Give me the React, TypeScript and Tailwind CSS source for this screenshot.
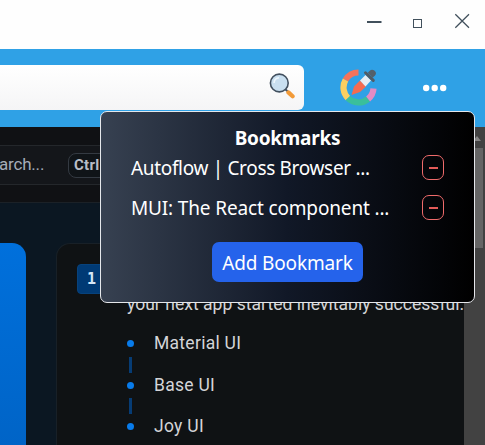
import React from "react";

function WindowControls() {
  return (
    <header className="flex h-[49px] items-start justify-end bg-[#fefefe] pr-[15px] pt-[13px]">
      <svg width="104" height="18" viewBox="0 0 104 18" fill="none" stroke="#41505c">
        <path d="M1 9H15.5" strokeWidth="2" />
        <rect x="47.5" y="6.5" width="8" height="8" />
        <path d="M89.3 1.2L103 14.8M103 1.2L89.3 14.8" strokeWidth="1.25" />
      </svg>
    </header>
  );
}

function SearchIcon() {
  return (
    <svg width="26" height="28" viewBox="0 0 26 28">
      <path d="M16.5 17.5L20 20.5" stroke="#465463" strokeWidth="2" />
      <path d="M19.4 20.4L23.6 24.3" stroke="#f29a38" strokeWidth="4.2" strokeLinecap="round" />
      <circle cx="10.3" cy="11" r="8.9" fill="#c9dff0" stroke="#42505f" strokeWidth="1.6" />
      <path d="M5 11A5.6 5.6 0 0 1 10 5.8" fill="none" stroke="#eef7fd" strokeWidth="1.6" />
    </svg>
  );
}

function ColorPickerIcon() {
  return (
    <svg width="38" height="38" viewBox="0 0 38 38" fill="none">
      <path d="M18.5 4.5A15 15 0 0 0 5.5 12" stroke="#f4735b" strokeWidth="6.2" />
      <path d="M5.5 12A15 15 0 0 0 7.9 30.1" stroke="#fbcf61" strokeWidth="6.2" />
      <path d="M7.9 30.1A15 15 0 0 0 28.1 31" stroke="#3abf9c" strokeWidth="6.2" />
      <path d="M28.1 31A15 15 0 0 0 33.5 20.5" stroke="#e28bc4" strokeWidth="6.2" />
      <path d="M11.5 27L14 18.5L20 12.5L26 18.5L20 24Z" fill="#f56b50" />
      <path d="M20 12.5L25.5 7L31 12.5L25.5 18.5Z" fill="#e7edf3" />
      <path d="M25.5 4.8L33.3 12.4" stroke="#505c67" strokeWidth="3" strokeLinecap="round" />
      <path d="M27.8 4.8L30 2.6C33 0 38 4.4 35 7.4L32.6 9.7Z" fill="#53606b" />
    </svg>
  );
}

function BookmarkRow({ title, spacing }: { title: string; spacing: string }) {
  return (
    <li className="flex h-10 items-start justify-between pl-[30px] pr-[30px]">
      <span className={`mt-0.5 whitespace-nowrap text-[19px] leading-[27px] ${spacing}`}>{title}</span>
      <button className="mt-0.5 flex h-[25px] w-[22px] items-center justify-center rounded-[7px] border border-[#ef6b6b]">
        <span className="h-0.5 w-[9px] bg-[#e35b59]" />
      </button>
    </li>
  );
}

function BookmarksPopup() {
  return (
    <section className="absolute left-[100px] top-[111px] flex h-[192px] w-[375px] flex-col rounded-[7px] border border-[#e5e7eb] bg-linear-to-r/srgb from-[#374151] via-[#111827] to-black font-['Noto_Sans','Open_Sans',sans-serif] text-white">
      <h2 className="mt-[12px] text-center text-[19px] leading-[28px] font-bold tracking-[-0.25px]">Bookmarks</h2>
      <ul className="mt-px h-[88px]">
        <BookmarkRow title="Autoflow | Cross Browser ..." spacing="tracking-[-0.33px]" />
        <BookmarkRow title="MUI: The React component ..." spacing="tracking-[-0.15px]" />
      </ul>
      <button className="mx-auto mt-px flex h-10 w-[151px] items-center justify-center whitespace-nowrap rounded-[7px] bg-[#2563eb] pt-[3px] text-[19px] tracking-[-0.15px]">
        Add Bookmark
      </button>
    </section>
  );
}

function ProductList() {
  return (
    <div className="grid w-[180px] grid-cols-[27px_1fr] font-['Roboto',sans-serif] text-[17.5px] leading-[24px] tracking-[0.28px] text-[#d4d5d8]">
      <div className="flex flex-col items-start pt-[9px]">
        <i className="size-[7px] rounded-full bg-[#087bea]" />
        <i className="ml-0.5 mt-[10px] h-4 w-[3px] bg-[#063c75]" />
        <i className="mt-[9px] size-[7px] rounded-full bg-[#087bea]" />
        <i className="ml-0.5 mt-[9px] h-4 w-[3px] bg-[#063c75]" />
        <i className="mt-[9px] size-[7px] rounded-full bg-[#087bea]" />
      </div>
      <div className="flex flex-col gap-[17.5px]">
        <span>Material UI</span>
        <span>Base UI</span>
        <span>Joy UI</span>
      </div>
    </div>
  );
}

function WebPage() {
  return (
    <main className="flex h-[318px] bg-[#0b1722]">
      <div className="h-full w-[464px] overflow-hidden">
        <nav className="h-[76px] border-b border-[#1b2127] bg-[#101114] pt-[18px]">
          <div className="flex h-[40px] items-center border-y border-[#24272b] bg-[#14161a]">
            <span className="-ml-px w-[69px] pb-px font-['Roboto',sans-serif] text-[17px] tracking-[-0.2px] text-[#a4acb8]">arch...</span>
            <span className="flex h-[25px] w-[60px] items-center rounded-[8px] border border-[#343a42] bg-[#101418] pl-[5px] font-['Roboto',sans-serif] text-[15px] font-bold tracking-[0.3px] text-[#b9bec7]">Ctrl</span>
          </div>
        </nav>
        <div className="flex h-[242px] pt-[40px]">
          <div className="h-[220px] w-[26px] shrink-0 rounded-tr-[14px] bg-linear-to-b from-[#0070dc] to-[#0063c5]" />
          <article className="ml-[30px] h-[240px] w-[408px] shrink-0 rounded-tl-[14px] border border-r-0 border-[#182027] bg-[#0f1214] pl-[20px] pt-5">
            <div className="flex">
              <span className="flex h-[30px] w-[34px] items-center rounded-[4px] border border-[#07427c] bg-[#003a75] pl-[9px] font-['DejaVu_Sans_Mono',monospace] text-[15px] font-bold text-[#d6e7f8]">1</span>
            </div>
            <div className="ml-[50px]">
              <p className="-mt-px whitespace-nowrap font-['Roboto',sans-serif] text-[17.5px] leading-[22px] tracking-[0.03px] text-[#d4d5d8]">your next app started inevitably successful.</p>
              <div className="mt-[16px]"><ProductList /></div>
            </div>
          </article>
        </div>
      </div>
      <div className="flex w-[21px] flex-col items-center bg-[#424242] pt-[9px]">
        <i className="ml-1 size-0 border-x-[4px] border-b-[5px] border-x-transparent border-b-[#858585]" />
        <i className="mt-[7px] h-[100px] w-[17px] bg-[#656565]" />
      </div>
    </main>
  );
}

export default function App() {
  return (
    <div className="relative h-[445px] w-[485px] overflow-hidden bg-white">
      <WindowControls />
      <div className="flex h-[78px] items-start bg-[#2fa1e6] pt-4">
        <div className="flex h-[45px] w-[304px] items-center justify-end rounded-r-[6px] bg-linear-to-b from-white to-[#f5f5f6] pr-[9px] pb-[3px]">
          <SearchIcon />
        </div>
        <div className="ml-[36px] mt-[3px]"><ColorPickerIcon /></div>
        <svg className="ml-[44px] mt-[19px]" width="26" height="8" viewBox="0 0 26 8" fill="white">
          <circle cx="4.2" cy="4" r="3.2" />
          <circle cx="12.7" cy="4" r="3.2" />
          <circle cx="21.2" cy="4" r="3.2" />
        </svg>
      </div>
      <WebPage />
      <BookmarksPopup />
    </div>
  );
}
